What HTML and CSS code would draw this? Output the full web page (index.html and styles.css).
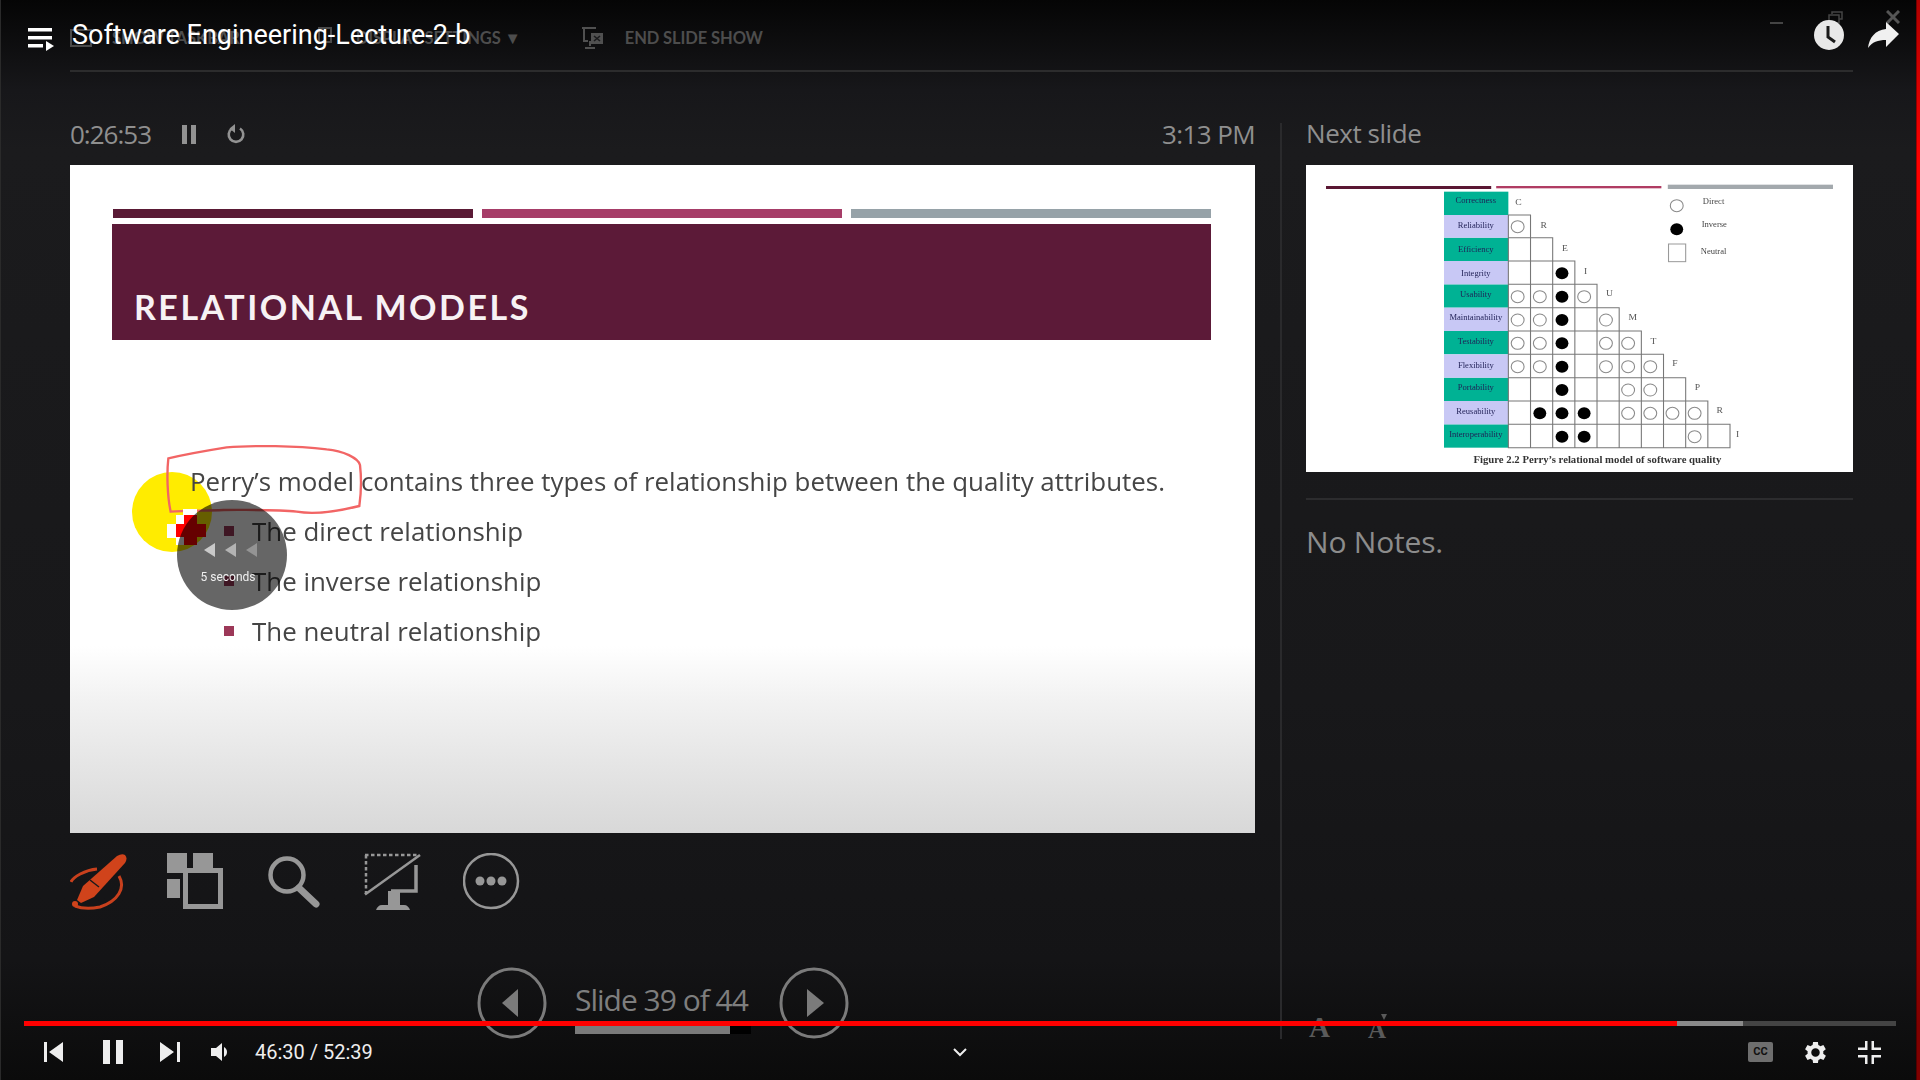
FILE: index.html
```html
<!DOCTYPE html>
<html lang="en">
<head>
<meta charset="utf-8">
<title>Software Engineering-Lecture-2-b</title>
<link rel="stylesheet" href="styles.css">
</head>
<body>
<div class="frame">
  <header class="ppt-top">
    <div class="ghost-item"><svg class="ghost-ico" width="22" height="18" viewBox="0 0 22 18"><rect x="1" y="1" width="20" height="16" fill="none" stroke="#4a4a4a" stroke-width="2"/></svg><span>SHOW TASKBAR</span></div>
    <div class="ghost-item"><svg class="ghost-ico" width="20" height="22" viewBox="0 0 20 22"><rect x="3" y="1" width="12" height="14" fill="none" stroke="#4a4a4a" stroke-width="2"/></svg><span>DISPLAY SETTINGS ▼</span></div>
    <div class="ghost-item"><svg class="ghost-ico" width="24" height="24" viewBox="0 0 24 24"><path d="M1 2h14M3 2v13h4M9 20v-5M4 22h10" fill="none" stroke="#505050" stroke-width="2"/><rect x="10" y="7" width="12" height="11" fill="#505050"/><path d="M13 10l6 5M19 10l-6 5" stroke="#1a1a1c" stroke-width="1.6"/></svg><span>END SLIDE SHOW</span></div>
  </header>

  <main class="ppt-main">
    <section class="presenter">
      <div class="timer-row">
        <div class="timer-left">
          <span class="timer">0:26:53</span>
          <span class="timer-pause"><i></i><i></i></span>
          <svg class="timer-reset" width="20" height="22" viewBox="0 0 20 22"><path d="M6 5.500A7.300 7.300 0 1 0 14 5.500" fill="none" stroke="#929292" stroke-width="2.6"/><path d="M9 1v9L3.500 5.500z" fill="#929292"/></svg>
        </div>
        <span class="clock-time">3:13 PM</span>
      </div>

      <div class="slide">
        <span class="laser-halo"></span>
        <div class="slide-bars"><i class="bar-a"></i><i class="bar-b"></i><i class="bar-c"></i></div>
        <div class="banner"><h1>RELATIONAL MODELS</h1></div>
        <div class="slide-body">
          <p>Perry’s model contains three types of relationship between the quality attributes.</p>
          <ul>
            <li>The direct relationship</li>
            <li>The inverse relationship</li>
            <li>The neutral relationship</li>
          </ul>
        </div>

        <svg class="ink" width="500" height="250" viewBox="0 0 1500 750"><path d="M175 85C230 72 300 60 350 52C430 45 560 48 650 58C700 62 745 85 750 105C755 150 752 200 748 228C700 240 620 255 560 245C500 238 420 240 340 240C280 242 220 243 182 245C172 200 170 130 175 85Z" fill="none" stroke="#f26565" stroke-width="7"/></svg>
        <svg class="laser" width="45" height="40" viewBox="165 230 135 120" shape-rendering="crispEdges"><path d="M220 235h42v20h-42zM197 255h25v25h-25zM172 280h25v42h-25zM197 320h25v25h-25z" fill="#fff"/><path d="M222 255h40v25h26v40h-26v25h-40v-25h-25v-40h25z" fill="#f00"/></svg>
        <div class="seek-hint">
          <div class="seek-arrows"><i class="arrow-a"></i><i class="arrow-b"></i><i class="arrow-c"></i></div>
          <span>5 seconds</span>
        </div>
      </div>

      <div class="tools">
        <svg width="57" height="60" viewBox="0 0 57 60"><path d="M27 16C15 17 3 24 1 29M49 23C56 35 48 48 30 54C20 56 10 55 5 53" fill="none" stroke="#c8401d" stroke-width="3"/><path d="M47 3Q52 0 55 2Q58 5 55 10L24 44L11 50L7 47L13 33Z" fill="#d0431b"/><path d="M20 27l9 7" stroke="#1a1a1c" stroke-width="1.500"/><circle cx="5" cy="51" r="3" fill="#d0431b"/></svg>
        <svg class="t-grid" width="56" height="60" viewBox="0 0 56 60"><path d="M0 0h20v20H0zM26 0h20v15H26zM0 26h13v19H0z" fill="#979797"/><rect x="18.500" y="17.500" width="35" height="36" fill="none" stroke="#979797" stroke-width="5"/></svg>
        <svg class="t-search" width="52" height="60" viewBox="0 0 52 60"><circle cx="19" cy="22" r="16.500" fill="none" stroke="#979797" stroke-width="4.500"/><path d="M31 35l17 16" stroke="#979797" stroke-width="7" stroke-linecap="round"/></svg>
        <svg class="t-mon" width="57" height="60" viewBox="0 0 57 60"><path d="M1 2h53M2 2v39" fill="none" stroke="#979797" stroke-width="2.500" stroke-dasharray="3.500 2.500"/><path d="M1 41.500L56 2" stroke="#979797" stroke-width="2.500"/><path d="M52 12v26H27" fill="none" stroke="#979797" stroke-width="3.500"/><path d="M24 38h12v15H24z" fill="#979797"/><path d="M12 57c1-3 3-5 6-5h22c3 0 5 2 6 5z" fill="#979797"/></svg>
        <svg class="t-more" width="57" height="60" viewBox="0 0 57 60"><circle cx="28" cy="28" r="27" fill="none" stroke="#979797" stroke-width="2.500"/><circle cx="17" cy="28" r="4.500" fill="#979797"/><circle cx="28" cy="28" r="4.500" fill="#979797"/><circle cx="39" cy="28" r="4.500" fill="#979797"/></svg>
      </div>

      <div class="slide-nav">
        <svg width="70" height="72" viewBox="0 0 70 72"><ellipse cx="35" cy="36" rx="33" ry="34" fill="none" stroke="#7b7b7b" stroke-width="3"/><path d="M41 22v28L25 36z" fill="#7b7b7b"/></svg>
        <div class="slide-count">
          <span>Slide 39 of 44</span>
          <div class="slide-track"><i></i></div>
        </div>
        <svg width="70" height="72" viewBox="0 0 70 72"><ellipse cx="35" cy="36" rx="33" ry="34" fill="none" stroke="#7b7b7b" stroke-width="3"/><path d="M28 22v28l17-14z" fill="#7b7b7b"/></svg>
      </div>
    </section>

    <aside class="notes-pane">
      <h2>Next slide</h2>
      <div class="thumb">
        <svg width="547" height="307" viewBox="18 15 1530 921" preserveAspectRatio="none">
          <defs>
            <circle id="o" r="18" fill="#fff" stroke="#8a8a8a" stroke-width="3"/>
            <circle id="f" r="18" fill="#000"/>
          </defs>
          <rect x="74" y="78" width="462" height="9" fill="#5a1733"/>
          <rect x="550" y="78" width="462" height="7" fill="#b03c63"/>
          <rect x="1030" y="74" width="462" height="13" fill="#a3a9ad"/>
          <g fill="#00b294">
            <rect x="404" y="95" width="180" height="70"/><rect x="404" y="233" width="180" height="70"/><rect x="404" y="373" width="180" height="70"/><rect x="404" y="513" width="180" height="70"/><rect x="404" y="653" width="180" height="70"/><rect x="404" y="793" width="180" height="70"/>
          </g>
          <g fill="#c8c8f5">
            <rect x="404" y="165" width="180" height="68"/><rect x="404" y="303" width="180" height="70"/><rect x="404" y="443" width="180" height="70"/><rect x="404" y="583" width="180" height="70"/><rect x="404" y="723" width="180" height="70"/>
          </g>
          <path d="M584 165H646V233H708V303H770V373H832V443H894V513H956V583H1018V653H1080V723H1142V793H1204V863H584ZM584 233H646M584 303H708M584 373H770M584 443H832M584 513H894M584 583H956M584 653H1018M584 723H1080M584 793H1142M646 233V863M708 303V863M770 373V863M832 443V863M894 513V863M956 583V863M1018 653V863M1080 723V863M1142 793V863" fill="none" stroke="#777" stroke-width="3"/>
          <rect x="1032" y="252" width="48" height="53" fill="none" stroke="#999" stroke-width="3"/>
          <use href="#o" x="610" y="200"/><use href="#f" x="734" y="340"/>
          <use href="#o" x="610" y="410"/><use href="#o" x="672" y="410"/><use href="#f" x="734" y="410"/><use href="#o" x="796" y="410"/>
          <use href="#o" x="610" y="480"/><use href="#o" x="672" y="480"/><use href="#f" x="734" y="480"/><use href="#o" x="857" y="480"/>
          <use href="#o" x="610" y="550"/><use href="#o" x="672" y="550"/><use href="#f" x="734" y="550"/><use href="#o" x="857" y="550"/><use href="#o" x="919" y="550"/>
          <use href="#o" x="610" y="620"/><use href="#o" x="672" y="620"/><use href="#f" x="734" y="620"/><use href="#o" x="857" y="620"/><use href="#o" x="919" y="620"/><use href="#o" x="981" y="620"/>
          <use href="#f" x="734" y="690"/><use href="#o" x="919" y="690"/><use href="#o" x="981" y="690"/>
          <use href="#f" x="672" y="760"/><use href="#f" x="734" y="760"/><use href="#f" x="796" y="760"/><use href="#o" x="919" y="760"/><use href="#o" x="981" y="760"/><use href="#o" x="1043" y="760"/><use href="#o" x="1105" y="760"/>
          <use href="#f" x="734" y="830"/><use href="#f" x="796" y="830"/><use href="#o" x="1105" y="830"/>
          <use href="#o" x="1055" y="137"/><use href="#f" x="1055" y="208"/>
          <g class="thumb-labels" text-anchor="middle">
            <text x="493" y="130">Correctness</text><text x="493" y="204">Reliability</text><text x="493" y="277">Efficiency</text><text x="493" y="347">Integrity</text><text x="493" y="411">Usability</text><text x="493" y="480">Maintainability</text><text x="493" y="551">Testability</text><text x="493" y="624">Flexibility</text><text x="493" y="690">Portability</text><text x="493" y="761">Reusability</text><text x="493" y="831">Interoperability</text>
          </g>
          <g class="thumb-legend" text-anchor="middle">
            <text x="1158" y="131">Direct</text><text x="1160" y="201">Inverse</text><text x="1158" y="282">Neutral</text>
          </g>
          <g class="thumb-letters" text-anchor="middle">
            <text x="612" y="134">C</text><text x="683" y="204">R</text><text x="742" y="274">E</text><text x="800" y="341">I</text><text x="867" y="409">U</text><text x="932" y="481">M</text><text x="990" y="551">T</text><text x="1050" y="619">F</text><text x="1113" y="690">P</text><text x="1175" y="760">R</text><text x="1225" y="830">I</text>
          </g>
          <text class="thumb-caption" x="833" y="908" text-anchor="middle">Figure 2.2 Perry’s relational model of software quality</text>
        </svg>
      </div>
      <div class="notes">No Notes.</div>
      <div class="font-size"><span class="big-a">A</span><span class="small-a">A</span></div>
    </aside>
  </main>
</div>

<div class="win-buttons">
  <span class="win-min"></span>
  <svg class="win-restore" width="15" height="13" viewBox="0 0 15 13"><path d="M4 3V1h10v7h-3M1 4h10v8H1z" fill="none" stroke="#444" stroke-width="1.500"/></svg>
  <svg class="win-close" width="14" height="14" viewBox="0 0 14 14"><path d="M1 1l12 12M13 1L1 13" stroke="#555" stroke-width="3"/></svg>
</div>
<div class="yt-top">
  <div class="yt-title">
    <svg width="26" height="24" viewBox="0 0 26 24"><path d="M0 1h24v3.500H0zM0 9h24v3.500H0zM0 17h15v3.500H0z" fill="#fff"/><path d="M18 14l8 5-8 5z" fill="#fff"/></svg>
    <span>Software Engineering-Lecture-2-b</span>
  </div>
  <div class="yt-actions">
    <svg width="30" height="30" viewBox="0 0 30 30"><circle cx="15" cy="15" r="15" fill="#e8e8e8"/><path d="M14 6v11l7 5" fill="none" stroke="#1a1a1a" stroke-width="3"/></svg>
    <svg width="31" height="26" viewBox="0 0 31 26"><path d="M18 0l13 12-13 13v-7C10 18 4 20 0 26 1 16 7 8 18 7z" fill="#f0f0f0"/></svg>
  </div>
</div>

<div class="yt-controls">
  <div class="progress"><i class="played"></i><i class="buffered"></i></div>
  <div class="control-row">
    <div class="control-group">
      <svg class="c-prev" width="19" height="20" viewBox="0 0 19 20"><path d="M0 0h3v20H0zM19 0v20L5 10z" fill="#eee"/></svg>
      <svg class="c-pause" width="20" height="24" viewBox="0 0 20 24"><path d="M0 0h7v24H0zM13 0h7v24h-7z" fill="#eee"/></svg>
      <svg class="c-next" width="20" height="20" viewBox="0 0 20 20"><path d="M0 0l14 10L0 20zM17 0h3v20h-3z" fill="#eee"/></svg>
      <svg class="c-vol" width="18" height="18" viewBox="0 0 18 18"><path d="M0 5h5l6-5v18l-6-5H0z" fill="#eee"/><path d="M13 4c2 1 3 3 3 5s-1 4-3 5z" fill="#eee"/></svg>
      <span class="c-time">46:30 / 52:39</span>
    </div>
    <svg class="c-chevron" width="14" height="9" viewBox="0 0 14 9"><path d="M1 1l6 6 6-6" fill="none" stroke="#eee" stroke-width="2"/></svg>
    <div class="control-group control-right">
      <span class="c-cc">CC</span>
      <svg width="23" height="23" viewBox="2.500 2.500 19 19"><path d="M19.400 13a7.700 7.700 0 0 0 0-2l2.100-1.600-2-3.500-2.500 1a7.500 7.500 0 0 0-1.700-1L15 3.300h-4l-.4 2.600a7.500 7.500 0 0 0-1.700 1l-2.500-1-2 3.500L6.500 11a7.700 7.700 0 0 0 0 2l-2.100 1.600 2 3.500 2.500-1a7.500 7.500 0 0 0 1.700 1l.4 2.600h4l.4-2.600a7.500 7.500 0 0 0 1.700-1l2.500 1 2-3.500zM13 15.500a3.500 3.500 0 1 1 0-7 3.500 3.500 0 0 1 0 7z" fill="#eee" transform="translate(-1 0)"/></svg>
      <svg width="23" height="23" viewBox="0 0 23 23"><path d="M7 0h2.500v9H0V6.500h7zM13.500 0H16v6.500h7V9h-9.500zM0 14h9.500v9H7v-6.500H0zM13.500 14H23v2.500h-7V23h-2.500z" fill="#eee"/></svg>
    </div>
  </div>
</div>
<span class="red-edge"></span>
</body>
</html>
```

FILE: styles.css
```css
* { box-sizing: border-box; }
html, body { margin: 0; padding: 0; }
body {
  position: relative;
  width: 1920px;
  height: 1080px;
  overflow: hidden;
  background: linear-gradient(#050505 0, #0b0b0c 30px, #17171a 90px, #1b1b1d 150px, #18181a 700px, #141416 960px, #0b0b0b 1080px);
  box-shadow: inset 1px 0 0 #2a2a2a;
  font-family: "Open Sans", "Liberation Sans", sans-serif;
}
.frame { display: flex; flex-direction: column; height: 1080px; padding: 0 67px 42px 70px; }

/* faded slide show toolbar */
.ppt-top {
  display: flex; align-items: center; height: 72px; gap: 60px; flex: none;
  padding-top: 6px;
  border-bottom: 2px solid #2c2c2d;
  color: #4d4d4d;
}
.ghost-item { display: flex; align-items: center; gap: 20px; font: 700 16.5px "Lato", sans-serif; white-space: nowrap; letter-spacing: -.1px; }
.ghost-item:nth-child(2) { margin-left: 16px; }
.ghost-item:nth-child(3) { margin-left: 0; }

.ppt-main { flex: 1; display: grid; grid-template-columns: 1212px 547px; column-gap: 24px; min-height: 0; }
.presenter { display: flex; flex-direction: column; margin-top: 51px; padding: 2px 25px 0 0; border-right: 2px solid #2a2a2c; }

.timer-row { display: flex; justify-content: space-between; align-items: center; height: 40px; padding-bottom: 22px; color: #8f8f8f; font: 26px "Open Sans", sans-serif; letter-spacing: -1px; }
.timer-left { display: flex; align-items: center; }
.timer-pause { display: flex; gap: 4px; margin-left: 31px; }
.timer-pause i { display: block; width: 5px; height: 19px; background: #929292; }
.timer-reset { margin-left: 30px; }
.clock-time { letter-spacing: -.6px; }

.slide { position: relative; height: 668px; flex: none; background: linear-gradient(#fff 0, #fff 72%, #f2f2f2 80%, #d8d8d8 100%); padding: 44px 44px 0 42px; }
.slide-bars { display: flex; gap: 9px; height: 9px; margin: 0 0 6px 1px; }
.slide-bars i { display: block; width: 360px; }
.bar-a { background: #5a1a35; }
.bar-b { background: #a63d68; }
.bar-c { background: #96a2a8; }
.banner { height: 116px; display: flex; align-items: flex-end; padding: 0 0 13px 22px; background: #5c1a38; }
.banner h1 { margin: 0; color: #f7f2f4; font: 700 34px "Lato", sans-serif; letter-spacing: 2.500px; }
.slide-body { position: relative; padding: 116px 0 0 78px; color: #454545; font-size: 25.9px; filter: blur(.3px); }
.slide-body p { margin: 0; line-height: 50px; white-space: nowrap; }
.slide-body ul { list-style: none; margin: 0; padding: 0 0 0 62px; }
.slide-body li { position: relative; line-height: 50px; }
.slide-body li::before { content: ""; position: absolute; left: -28px; top: 20px; width: 10px; height: 10px; background: #9c3858; }

.laser-halo { position: absolute; left: 62px; top: 307px; width: 80px; height: 80px; border-radius: 50%; background: #ffec00; }
.ink { position: absolute; left: 40px; top: 265px; }
.laser { position: absolute; left: 95px; top: 342px; }
.seek-hint {
  position: absolute; left: 107px; top: 335px; width: 110px; height: 110px; border-radius: 50%;
  background: rgba(0, 0, 0, .6); color: #fff; font: 12px "Roboto", sans-serif;
  display: flex; flex-direction: column; align-items: center; padding-top: 43px;
}
.seek-arrows { display: flex; gap: 10px; height: 14px; margin: 0 0 13px -3px; }
.seek-arrows i { width: 0; height: 0; border-top: 7px solid transparent; border-bottom: 7px solid transparent; border-right: 11px solid #fff; }
.arrow-a { opacity: .65; }
.arrow-b { opacity: .5; }
.arrow-c { opacity: .3; }
.seek-hint span { margin-left: -8px; opacity: .9; }

.tools { display: flex; align-items: flex-start; margin-top: 20px; height: 60px; flex: none; }
.t-grid { margin-left: 40px; }
.t-search { margin-left: 45px; }
.t-mon { margin-left: 44px; }
.t-more { margin-left: 42px; }
.slide-nav { display: flex; align-items: flex-start; margin: 54px 0 0 407px; height: 72px; }
.slide-count { width: 178px; margin: 0 26px 0 28px; display: flex; flex-direction: column; align-items: flex-start; }
.slide-count span { color: #7e7e7e; font-size: 30px; line-height: 66px; letter-spacing: -1px; white-space: nowrap; height: 59px; }
.slide-track { width: 176px; height: 8px; background: #000; }
.slide-track i { display: block; width: 155px; height: 8px; background: #7a7a7a; }

.notes-pane { display: flex; flex-direction: column; padding-top: 53px; }
.notes-pane h2 { margin: 0; height: 40px; color: #8f8f8f; font: 400 26px/16px "Open Sans", sans-serif; letter-spacing: -.45px; }
.thumb { width: 547px; height: 307px; background: #fff; flex: none; }
.thumb svg { display: block; filter: blur(.35px); }
.thumb-labels text { font: 24px "Liberation Serif", serif; fill: #1f1f55; }
.thumb-legend text { font: 24px "Liberation Serif", serif; fill: #444; }
.thumb-letters text { font: 27px "Liberation Serif", serif; fill: #555; }
.thumb-caption { font: 700 30px "Liberation Serif", serif; fill: #333; }
.notes { margin-top: 26px; border-top: 2px solid #2c2c2e; padding-top: 22px; color: #8c8c8c; font-size: 30px; line-height: 40px; letter-spacing: -.2px; flex: 1; }
.font-size { display: flex; gap: 38px; align-items: flex-end; height: 30px; margin: 0 0 -3px 3px; color: #5a5a5a; font-family: "Liberation Serif", serif; font-weight: 700; line-height: 1; }
.big-a { font-size: 29px; }
.small-a { font-size: 25px; position: relative; }
.small-a::before { content: ""; position: absolute; left: 13px; top: -3px; border-top: 6px solid #5a5a5a; border-left: 3px solid transparent; border-right: 3px solid transparent; }

/* video player overlays */
.yt-top { position: absolute; left: 28px; right: 21px; top: 20px; display: flex; justify-content: space-between; align-items: flex-start; }
.yt-title { display: flex; align-items: flex-start; gap: 18px; color: #fff; font: 27px/30px "Roboto", sans-serif; }
.yt-title svg { margin-top: 7px; }
.yt-actions { display: flex; gap: 24px; align-items: center; position: relative; top: 0; }
.win-buttons { position: absolute; left: 1770px; top: 10px; display: flex; align-items: center; }
.win-min { display: block; width: 13px; height: 2px; background: #444; margin-top: 12px; }
.win-restore { margin-left: 45px; }
.win-close { margin-left: 43px; }
.yt-controls { position: absolute; left: 24px; right: 24px; top: 1021px; }
.progress { position: relative; height: 5px; background: #444; }
.progress i { position: absolute; left: 0; top: 0; height: 5px; display: block; }
.played { width: 1653px; background: #f00; z-index: 1; }
.buffered { width: 1719px; background: #8a8a8a; }
.control-row { display: flex; justify-content: space-between; align-items: center; height: 52px; }
.control-group { display: flex; align-items: center; }
.c-prev { margin-left: 20px; }
.c-pause { margin-left: 40px; }
.c-next { margin-left: 37px; }
.c-vol { margin-left: 31px; }
.c-time { margin-left: 26px; color: #eee; font: 20px "Roboto", sans-serif; }
.c-chevron { position: absolute; left: 929px; top: 27px; }
.control-right { gap: 31px; padding-right: 15px; }
.c-cc { display: block; width: 25px; height: 20px; border-radius: 2px; background: #6e6e6e; color: #111; font: 700 11px/20px "Roboto", sans-serif; text-align: center; }
.red-edge { position: absolute; right: 0; top: 0; width: 4px; height: 1080px; background: linear-gradient(#b00000, #f00 15%, #f00 60%, #800000 95%); box-shadow: inset 1px 0 0 rgba(0, 0, 0, .35); }
```
